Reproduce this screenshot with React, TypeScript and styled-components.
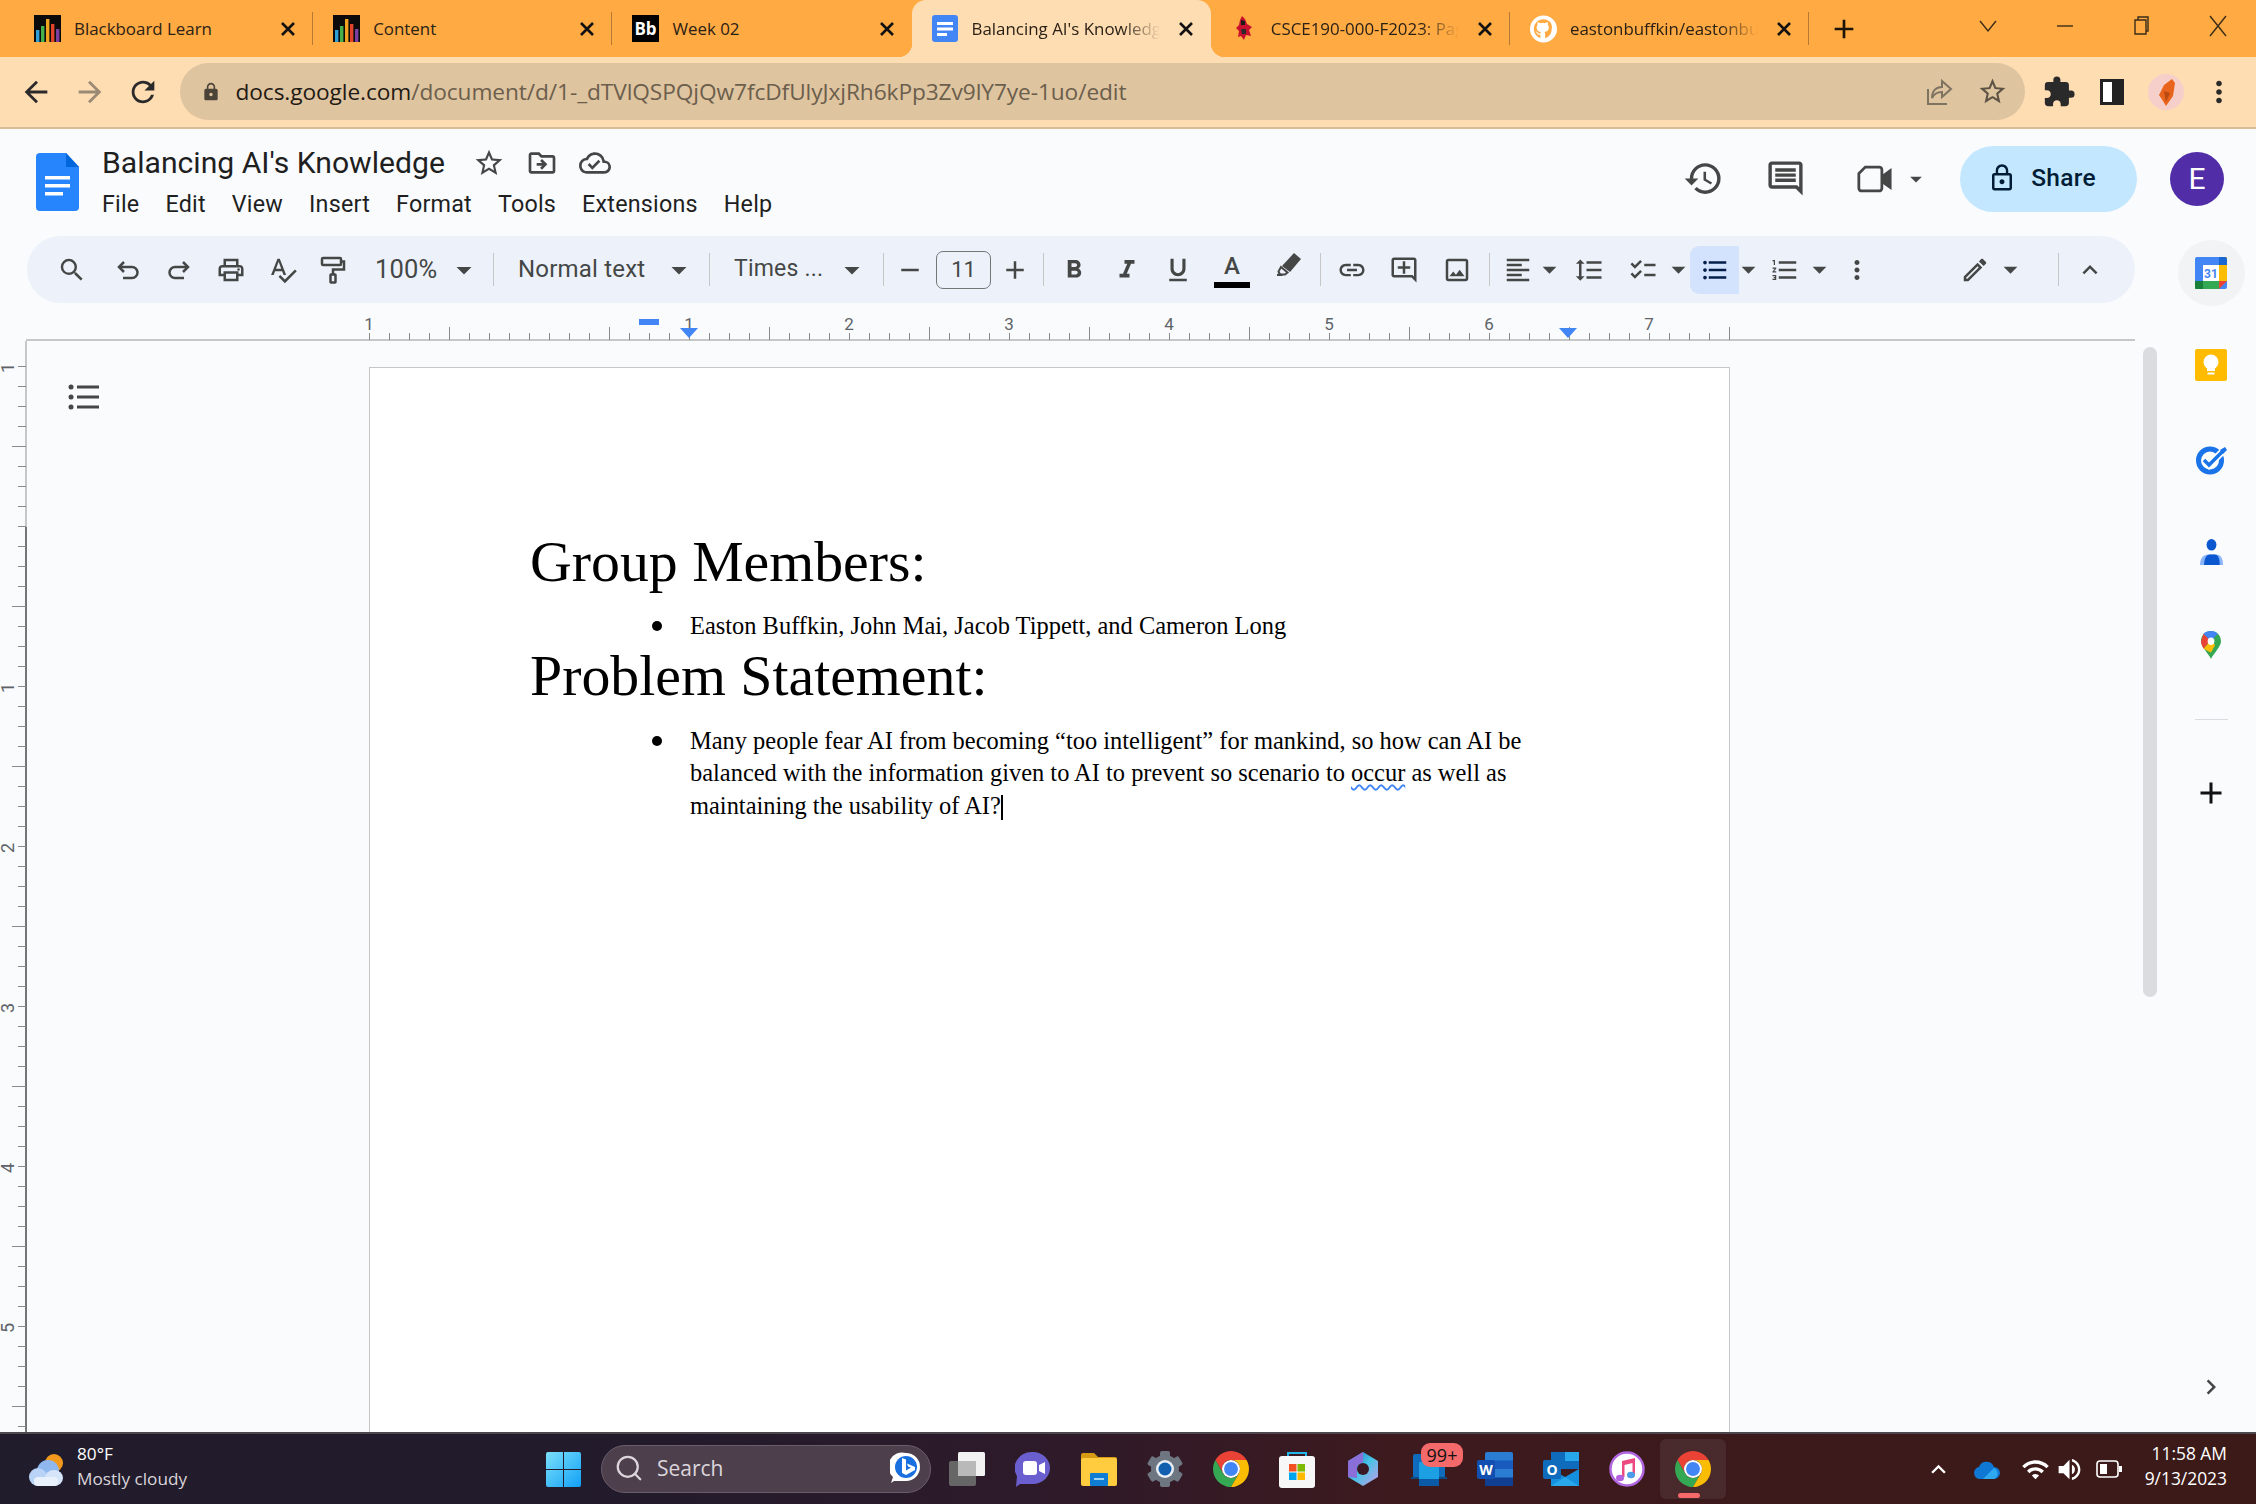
import React from "react";
import styled, { createGlobalStyle } from "styled-components";
import {
  MdAdd, MdArrowBack, MdArrowDropDown, MdArrowForward, MdChecklist, MdChevronRight, MdExpandLess, MdExtension,
  MdFormatAlignLeft, MdFormatBold, MdFormatItalic, MdFormatLineSpacing, MdFormatListBulleted, MdFormatListNumbered,
  MdFormatUnderlined, MdHistory, MdKeyboardArrowUp, MdLink, MdLock, MdLockOutline, MdMoreVert, MdOutlineAddComment,
  MdOutlineCloudDone, MdOutlineComment, MdOutlineDriveFileMove, MdOutlineEdit, MdOutlineImage,
  MdOutlinePrint, MdOutlineSpellcheck, MdRefresh, MdRemove, MdSearch, MdStarBorder, MdVolumeUp, MdWifi,
} from "react-icons/md";
import { Search } from "lucide-react";

const GlobalStyle = createGlobalStyle`
  html, body { margin: 0; padding: 0; width: 2256px; height: 1504px; overflow: hidden; }
  body { font-family: "Roboto", "Liberation Sans", sans-serif; background: #f9fbfd; }
`;

const Screen = styled.div`
  width: 2256px;
  height: 1504px;
  display: flex;
  flex-direction: column;
  overflow: hidden;
`;

/* ---------- browser chrome ---------- */
const TabStrip = styled.div`
  height: 57px;
  flex: none;
  background: #ffaa42;
  display: flex;
  padding-left: 14px;
`;
const Tab = styled.div<{ $active?: boolean; $sep?: boolean }>`
  width: 299.2px;
  height: 57px;
  flex: none;
  box-sizing: border-box;
  padding: 0 16px 0 20px;
  display: flex;
  align-items: center;
  gap: 13px;
  position: relative;
  background: ${(p) => (p.$active ? "#ffddb3" : "transparent")};
  border-radius: ${(p) => (p.$active ? "14px 14px 0 0" : "0")};
  &::after {
    content: "";
    display: ${(p) => (p.$sep ? "block" : "none")};
    position: absolute;
    right: 0;
    top: 12px;
    height: 33px;
    width: 1px;
    background: #b47a35;
  }
`;
const TabFoot = styled.span<{ $side: "left" | "right" }>`
  position: absolute;
  bottom: 0;
  width: 14px;
  height: 14px;
  ${(p) => (p.$side === "left" ? "left: -14px;" : "right: -14px;")}
  background: radial-gradient(circle at ${(p) => (p.$side === "left" ? "0 0" : "100% 0")}, transparent 14px, #ffddb3 14.5px);
`;
const TabIcon = styled.span`
  width: 27px;
  height: 27px;
  flex: none;
  display: flex;
  align-items: center;
  justify-content: center;
`;
const TabLabel = styled.span<{ $fade?: boolean }>`
  flex: 1;
  min-width: 0;
  font: 400 16.9px "Open Sans", sans-serif;
  color: #2a2116;
  white-space: nowrap;
  overflow: hidden;
  ${(p) => p.$fade && "mask-image: linear-gradient(to right, #000 78%, transparent 98%);"}
`;
const TabClose = styled.span`
  flex: none;
  width: 18px;
  display: flex;
  justify-content: center;
`;
const NewTab = styled.span`
  margin-left: 17px;
  width: 36px;
  display: flex;
  align-items: center;
  justify-content: center;
  color: #1c1408;
  font-size: 32px;
`;
const WindowControls = styled.div`
  margin-left: auto;
  display: flex;
`;
const WindowButton = styled.span`
  width: 76.5px;
  height: 52px;
  display: flex;
  align-items: center;
  justify-content: center;
`;
const NavBar = styled.div`
  height: 69px;
  flex: none;
  background: #ffddb3;
  border-bottom: 2px solid #d9bd9b;
  display: flex;
  align-items: center;
  padding: 0 17px 1px 16px;
  gap: 13.5px;
`;
const NavButton = styled.span<{ $dim?: boolean }>`
  width: 40px;
  height: 40px;
  flex: none;
  display: flex;
  align-items: center;
  justify-content: center;
  font-size: 34px;
  color: ${(p) => (p.$dim ? "#9a8a74" : "#2a2a2a")};
`;
const Omnibox = styled.div`
  flex: 1;
  height: 57px;
  margin-left: 3px;
  background: #dfc4a0;
  border-radius: 29px;
  display: flex;
  align-items: center;
  padding: 0 17px 0 21px;
  color: #4b4338;
`;
const Url = styled.span`
  margin-left: 15px;
  font: 400 22.68px "Open Sans", sans-serif;
  letter-spacing: -0.08px;
  color: #6b5e4c;
  white-space: nowrap;
  strong { font-weight: 400; color: #1f1a14; }
`;
const OmniActions = styled.div`
  margin-left: auto;
  display: flex;
  align-items: center;
  gap: 22px;
  font-size: 31px;
  color: #5d5345;
`;

/* ---------- docs header ---------- */
const DocHeader = styled.div`
  height: 107px;
  flex: none;
  background: #f9fbfd;
  display: flex;
  padding: 0 32px 0 36px;
`;
const DocLogo = styled.svg`
  width: 43px;
  height: 58px;
  margin-top: 24px;
  flex: none;
`;
const TitleBlock = styled.div`
  margin-left: 23px;
  padding-top: 12px;
`;
const TitleRow = styled.div`
  display: flex;
  align-items: center;
  height: 42px;
`;
const DocTitle = styled.span`
  font: 400 30.15px "Roboto", sans-serif;
  color: #1f1f1f;
`;
const TitleIcons = styled.div`
  margin-left: 28px;
  padding-top: 2px;
  display: flex;
  align-items: center;
  gap: 21px;
  font-size: 32px;
  color: #444746;
`;
const MenuRow = styled.div`
  display: flex;
  gap: 26px;
  margin-top: 7px;
  font: 400 23.3px "Roboto", sans-serif;
  color: #1f1f1f;
  letter-spacing: 0.22px;
`;
const HeaderRight = styled.div`
  margin-left: auto;
  display: flex;
  align-items: center;
  height: 99px;
`;
const HeaderIcon = styled.span<{ $w: number; $ml?: number }>`
  width: ${(p) => p.$w}px;
  flex: none;
  margin-left: ${(p) => p.$ml || 0}px;
  display: flex;
  justify-content: center;
  align-items: center;
  font-size: 41px;
  color: #444746;
  svg { flex: none; }
`;
const ShareButton = styled.div`
  width: 177px;
  height: 66px;
  box-sizing: border-box;
  padding: 0 14px 2px 0;
  border-radius: 33px;
  background: #c2e7ff;
  display: flex;
  align-items: center;
  justify-content: center;
  gap: 14px;
  color: #001d35;
  font: 500 24.5px "Roboto", sans-serif;
  letter-spacing: 0.3px;
`;
const Avatar = styled.div`
  width: 54px;
  height: 54px;
  margin-left: 33px;
  border-radius: 50%;
  background: #512da8;
  color: #fff;
  display: flex;
  align-items: center;
  justify-content: center;
  font: 400 30px "Roboto", sans-serif;
`;

/* ---------- workspace ---------- */
const Workspace = styled.div`
  flex: 1;
  min-height: 0;
  display: flex;
`;
const MainColumn = styled.div`
  width: 2166px;
  flex: none;
  display: flex;
  flex-direction: column;
`;
const Toolbar = styled.div`
  height: 67px;
  flex: none;
  margin: 0 31px 0 27px;
  padding: 0 14px 0 17px;
  background: #edf2fa;
  border-radius: 34px;
  display: flex;
  align-items: center;
  color: #444746;
`;
const Tool = styled.span<{ $w: number; $pl?: number; $active?: boolean }>`
  width: ${(p) => p.$w}px;
  height: 48px;
  flex: none;
  box-sizing: border-box;
  padding-left: ${(p) => p.$pl || 0}px;
  display: flex;
  align-items: center;
  justify-content: center;
  font-size: 30px;
  color: ${(p) => (p.$active ? "#041e49" : "#444746")};
  background: ${(p) => (p.$active ? "#d3e3fd" : "transparent")};
  border-radius: ${(p) => (p.$active ? "9px 0 0 9px" : "0")};
  svg { flex: none; }
`;
const Select = styled.span<{ $w: number; $pl: number; $caretAt: number; $fs: number }>`
  width: ${(p) => p.$w}px;
  height: 48px;
  flex: none;
  box-sizing: border-box;
  padding: 0 0 2px ${(p) => p.$pl}px;
  display: grid;
  grid-template-columns: ${(p) => p.$caretAt}px 36px;
  align-items: center;
  font: 400 ${(p) => p.$fs}px "Roboto", sans-serif;
  color: #444746;
  letter-spacing: 0.2px;
  white-space: nowrap;
  svg { font-size: 36px; margin-top: 2px; }
`;
const Divider = styled.span<{ $ml?: number }>`
  width: 1px;
  height: 33px;
  flex: none;
  margin-left: ${(p) => p.$ml || 0}px;
  background: #c7c7c7;
`;
const FontSizeBox = styled.span`
  width: 55px;
  height: 38px;
  flex: none;
  box-sizing: border-box;
  border: 1px solid #747775;
  border-radius: 7px;
  display: flex;
  align-items: center;
  justify-content: center;
  font: 400 22px "Roboto", sans-serif;
  color: #444746;
`;
const ColorA = styled.span`
  display: flex;
  flex-direction: column;
  align-items: center;
  font: 500 24px/28px "Roboto", sans-serif;
  color: #444746;
  &::after {
    content: "";
    width: 36px;
    height: 6px;
    background: #000;
    margin-top: 2px;
  }
`;
const ToolSpacer = styled.span`
  flex: 1;
`;
const HighlighterIcon = styled.svg`
  width: 30px;
  height: 30px;
  margin-top: -10px;
`;
const RulerRow = styled.svg`
  width: 2166px;
  height: 38px;
  flex: none;
  display: block;
`;
const EditorRow = styled.div`
  flex: 1;
  min-height: 0;
  display: flex;
  overflow: hidden;
`;
const SideRuler = styled.svg`
  width: 27px;
  height: 1091px;
  flex: none;
`;
const OutlineColumn = styled.div`
  width: 342px;
  flex: none;
  box-sizing: border-box;
  padding: 43px 0 0 41px;
`;
const Page = styled.div`
  width: 1361px;
  flex: none;
  box-sizing: border-box;
  margin-top: 26px;
  height: 1200px;
  background: #fff;
  border: 1px solid #c7c7c7;
  border-bottom: 0;
  padding: 162px 0 0 160px;
  font-family: "Liberation Serif", serif;
  color: #000;
`;
const Heading = styled.div<{ $mb: number }>`
  font-size: 57.8px;
  line-height: 64px;
  margin-bottom: ${(p) => p.$mb}px;
`;
const BulletItem = styled.div<{ $mb?: number }>`
  display: flex;
  padding-left: 122px;
  width: 918px;
  margin-bottom: ${(p) => p.$mb || 0}px;
  font-size: 24.44px;
  line-height: 32.5px;
`;
const BulletDot = styled.span`
  width: 10px;
  height: 10px;
  margin: 11px 28px 0 0;
  flex: none;
  background: #000;
  border-radius: 50%;
`;
const Misspelled = styled.span`
  text-decoration: underline wavy #4285f4 1.5px;
  text-underline-offset: 3px;
`;
const Caret = styled.span`
  display: inline-block;
  width: 2px;
  height: 25px;
  background: #000;
  vertical-align: -6px;
`;
const ScrollColumn = styled.div`
  flex: 1;
  padding: 6px 9px 0 0;
  display: flex;
  justify-content: flex-end;
`;
const ScrollThumb = styled.div`
  width: 14px;
  height: 650px;
  background: #dadce0;
  border-radius: 7px;
`;
const SidePanel = styled.div`
  flex: 1;
  position: relative;
  display: flex;
  flex-direction: column;
  align-items: center;
  padding-top: 4px;
`;
const SideSlot = styled.div<{ $h: number; $mt?: number; $round?: boolean }>`
  width: 67px;
  height: ${(p) => p.$h}px;
  margin-top: ${(p) => p.$mt || 0}px;
  flex: none;
  display: flex;
  align-items: center;
  justify-content: center;
  border-radius: 50%;
  background: ${(p) => (p.$round ? "#f1f3f4" : "transparent")};
  font-size: 36px;
  color: #111;
`;
const SideRule = styled.div`
  width: 33px;
  height: 1px;
  flex: none;
  margin: 24px 0 53px;
  background: #dadce0;
`;
const SideExpand = styled.div`
  position: absolute;
  bottom: 30px;
  font-size: 30px;
  color: #444746;
  display: flex;
`;

/* ---------- taskbar ---------- */
const Taskbar = styled.div`
  height: 70px;
  flex: none;
  border-top: 2px solid #4b474c;
  background: linear-gradient(90deg, #211c2c 0%, #231b2c 30%, #2f1a29 48%, #3d1a1e 62%, #3b1a18 100%);
  display: flex;
  align-items: center;
  position: relative;
  color: #fff;
  font-family: "Open Sans", sans-serif;
`;
const Weather = styled.div`
  width: 546px;
  flex: none;
  box-sizing: border-box;
  padding-left: 28px;
  display: flex;
  align-items: center;
  gap: 11px;
`;
const WeatherText = styled.div`
  font-size: 17.2px;
  line-height: 25px;
  padding-bottom: 6px;
  span { display: block; color: #d9d5d9; }
`;
const TaskIcons = styled.div`
  display: flex;
  align-items: center;
`;
const StartIcon = styled.svg`
  width: 35px;
  height: 35px;
  flex: none;
`;
const SearchPill = styled.div`
  width: 330px;
  height: 48px;
  margin: 0 3px 0 20px;
  flex: none;
  box-sizing: border-box;
  border: 1.5px solid #6a5d69;
  border-radius: 24px;
  background: #4d3f4c;
  display: flex;
  align-items: center;
  padding: 0 8px 2px 12px;
  color: #dcd6dc;
  font-size: 21px;
  gap: 13px;
`;
const SearchAction = styled.svg`
  margin-left: auto;
  width: 32px;
  height: 32px;
`;
const AppSlot = styled.span<{ $active?: boolean }>`
  width: 66px;
  height: 60px;
  flex: none;
  position: relative;
  display: flex;
  align-items: center;
  justify-content: center;
  border-radius: 6px;
  background: ${(p) => (p.$active ? "rgba(255,255,255,0.07)" : "transparent")};
`;
const RunningMark = styled.span`
  position: absolute;
  bottom: 1px;
  left: 18px;
  width: 22px;
  height: 5px;
  border-radius: 3px;
  background: #f7686a;
`;
const CountBadge = styled.span`
  position: absolute;
  left: 25px;
  top: 4px;
  width: 42px;
  height: 24px;
  border-radius: 9px;
  background: #f4696a;
  color: #111;
  font-size: 18px;
  line-height: 24px;
  text-align: center;
`;
const Tray = styled.div`
  margin-left: auto;
  display: flex;
  align-items: center;
  padding-right: 29px;
`;
const TrayIcon = styled.span<{ $w: number }>`
  width: ${(p) => p.$w}px;
  flex: none;
  display: flex;
  justify-content: center;
  font-size: 29px;
  svg { flex: none; }
`;
const Clock = styled.div`
  margin-left: 9px;
  text-align: right;
  font-size: 17.4px;
  line-height: 25px;
  padding-bottom: 6px;
`;

/* ---------- drawings ---------- */
const CloseX = () => (
  <svg width="16" height="16" viewBox="0 0 16 16" stroke="#111" strokeWidth="2.6">
    <path d="M2 2l12 12M14 2L2 14" />
  </svg>
);
const BarsFavicon = () => (
  <svg width="27" height="27" viewBox="0 0 27 27">
    <rect width="27" height="27" fill="#0b0b0b" />
    <rect x="2" y="15" width="3.4" height="12" fill="#2f9fd8" />
    <rect x="7" y="11" width="3.4" height="16" fill="#46b04a" />
    <rect x="12" y="4" width="3.4" height="23" fill="#f0a31e" />
    <rect x="17" y="9" width="3.4" height="18" fill="#e0452c" />
    <rect x="22" y="14" width="3.4" height="13" fill="#7a3fa0" />
  </svg>
);
const BbFavicon = () => (
  <svg width="27" height="27" viewBox="0 0 27 27">
    <rect width="27" height="27" fill="#000" />
    <text x="13.5" y="20" textAnchor="middle" fill="#fff" fontFamily="Open Sans" fontWeight="700" fontSize="17">Bb</text>
  </svg>
);
const DocsFavicon = () => (
  <svg width="26" height="27" viewBox="0 0 26 27">
    <rect width="26" height="27" rx="3" fill="#4285f4" />
    <rect x="5" y="7" width="16" height="3" fill="#fff" />
    <rect x="5" y="12.5" width="16" height="3" fill="#fff" />
    <rect x="5" y="18" width="10" height="3" fill="#fff" />
  </svg>
);
const BirdFavicon = () => (
  <svg width="20" height="27" viewBox="4 0 20 27">
    <path d="M12 1l3 3 2 5 5 3-3 3 2 6-5-1-2 5-3-4-3 1 1-6-3-3 3-3 1-5z" fill="#c8102e" />
    <path d="M11 5l4 1 0 4-4 0z" fill="#1b1b1b" />
    <path d="M11 14l5 0 0 5-4 0z" fill="#2b2b2b" />
    <path d="M9 24l2 0 0 2-2 0zM15 24l2 0 0 2-2 0z" fill="#e9b949" />
  </svg>
);
const GithubFavicon = () => (
  <svg width="28" height="28" viewBox="0 0 28 28">
    <circle cx="14" cy="14" r="14" fill="#fff" />
    <path d="M14 4c-5.500 0-10 4.400-10 9.900 0 4.400 2.900 8.100 6.800 9.400v-3.400c-2.800.6-3.400-1.200-3.400-1.200-.5-1.100-1.100-1.400-1.100-1.400-.9-.6.1-.6.1-.6 1 .1 1.500 1 1.500 1 .9 1.500 2.300 1.100 2.900.8.1-.6.3-1.100.6-1.300-2.200-.3-4.500-1.100-4.500-4.900 0-1.100.4-2 1-2.700-.1-.3-.4-1.300.1-2.600 0 0 .8-.3 2.700 1 .8-.2 1.600-.3 2.500-.3s1.700.1 2.500.3c1.900-1.300 2.700-1 2.700-1 .5 1.300.2 2.300.1 2.600.6.7 1 1.600 1 2.700 0 3.800-2.300 4.600-4.500 4.900.4.3.7.9.7 1.900v4.500c3.900-1.300 6.800-5 6.800-9.400C24 8.400 19.500 4 14 4z" fill="#ffaa42" />
  </svg>
);
const WindowGlyph = ({ kind }: { kind: string }) => (
  <svg width="24" height="26" viewBox="0 0 24 26" fill="none" stroke="#3a2c18" strokeWidth="1.4">
    {kind === "chev" && <path d="M4 8l8 10 8-10" />}
    {kind === "min" && <path d="M4 13h16" />}
    {kind === "max" && <path d="M6 7h11v14H6zM9 7V4h10v14h-2" />}
    {kind === "close" && <path d="M4 3l16 20M20 3L4 23" />}
  </svg>
);
const ShareInPage = () => (
  <svg width="30" height="30" viewBox="0 0 30 30" fill="none" stroke="#7e7360" strokeWidth="2">
    <path d="M17 4l9 8-9 8v-5c-5 0-8 2-10 6 0-7 4-11 10-11z" />
    <path d="M3 12v15h19" />
  </svg>
);
const SidePanelGlyph = () => (
  <svg width="24" height="26" viewBox="0 0 24 26">
    <rect x="1.500" y="1.500" width="21" height="23" fill="#fff" stroke="#222" strokeWidth="3" />
    <rect x="12" y="1.500" width="11" height="23" fill="#222" />
  </svg>
);
const ProfileGlyph = () => (
  <svg width="36" height="38" viewBox="0 0 36 38">
    <circle cx="18" cy="19" r="18" fill="#f7cfca" />
    <path d="M11 22l5-10 8-6 3 4-2 13-7 10-3-5z" fill="#e8631c" />
    <path d="M16 18l6 2-4 9z" fill="#b84a12" />
  </svg>
);
const DocsLogo = () => (
  <DocLogo viewBox="0 0 43 58">
    <path d="M4 0h26l13 14v40a4 4 0 0 1-4 4H4a4 4 0 0 1-4-4V4a4 4 0 0 1 4-4z" fill="#2684fc" />
    <path d="M30 0l13 14H30z" fill="#0066da" />
    <rect x="9" y="23" width="25" height="3.500" fill="#fff" />
    <rect x="9" y="31" width="25" height="3.500" fill="#fff" />
    <rect x="9" y="39" width="18" height="3.500" fill="#fff" />
  </DocLogo>
);
const MeetGlyph = () => (
  <svg width="35" height="28" viewBox="0 0 38 30" fill="none" stroke="#444746" strokeWidth="3">
    <path d="M9 2h15a3 3 0 0 1 3 3v20a3 3 0 0 1-3 3H5a3 3 0 0 1-3-3V9z" />
    <path d="M29 11l7-5v18l-7-5z" fill="#444746" />
  </svg>
);
const UndoGlyph = ({ flip }: { flip?: boolean }) => (
  <svg width="30" height="30" viewBox="0 0 30 30" fill="none" stroke="currentColor" strokeWidth="2.500">
    <g transform={flip ? "translate(30 0) scale(-1 1)" : undefined}>
      <path d="M11 7l-5 5 5 5" />
      <path d="M6 12h13a5.500 5.500 0 0 1 0 11H10" />
    </g>
  </svg>
);
const RollerGlyph = () => (
  <svg width="28" height="30" viewBox="0 0 28 30" fill="none" stroke="currentColor" strokeWidth="2.500">
    <rect x="3" y="3" width="19" height="7" rx="1" />
    <path d="M22 6.500h3v8H14v5" />
    <rect x="11.500" y="19.500" width="5" height="8" rx="0.500" />
  </svg>
);
const Highlighter = () => (
  <HighlighterIcon viewBox="0 0 30 30" fill="#444746">
    <path d="M20 3l7 6-11 13-8-6z" />
    <path d="M7 17l6.500 5.500-2.500 2H6l-1.500-3z" fill="none" stroke="#444746" strokeWidth="2" />
    <path d="M3 24l3-1 3 3H3z" />
  </HighlighterIcon>
);
const Drop = () => <MdArrowDropDown size={33} />;
const OutlineList = () => (
  <svg width="32" height="26" viewBox="0 0 32 26" display="block">
    {[3, 13, 23].map((y) => (
      <g key={y} fill="#444746">
        <circle cx="3" cy={y} r="2.500" />
        <rect x="9" y={y - 1.5} width="22" height="3" />
      </g>
    ))}
  </svg>
);

const RULER_TICKS = Array.from({ length: 69 }, (_, i) => i);
const TopRuler = () => (
  <RulerRow viewBox="0 0 2166 38">
    <rect x="26" y="36" width="2109" height="2" fill="#c7c7c7" />
    {RULER_TICKS.map((i) => (
      <rect key={i} x={369 + i * 20} y={i % 4 === 0 && i % 8 !== 0 ? 24 : 30} width="1" height={i % 4 === 0 && i % 8 !== 0 ? 13 : 7} fill="#8a8a8a" />
    ))}
    {[["1", 369], ["1", 689], ["2", 849], ["3", 1009], ["4", 1169], ["5", 1329], ["6", 1489], ["7", 1649]].map(([label, x]) => (
      <text key={x} x={x} y="27" textAnchor="middle" fontFamily="Roboto" fontSize="17" fill="#5f6368">{label}</text>
    ))}
    <rect x="639" y="16" width="20" height="6" fill="#4285f4" />
    <path d="M680 25h18l-9 10z" fill="#4285f4" />
    <path d="M1559 25h18l-9 10z" fill="#4285f4" />
  </RulerRow>
);
const LeftRuler = () => (
  <SideRuler viewBox="0 0 27 1091">
    <rect x="25" y="0" width="2" height="186" fill="#c7c7c7" />
    <rect x="25" y="186" width="2" height="905" fill="#757575" />
    {Array.from({ length: 55 }, (_, i) => i).map((i) => (
      <rect key={i} x={i % 4 === 0 && i % 8 !== 0 ? 12 : 18} y={25 + i * 20} width={i % 4 === 0 && i % 8 !== 0 ? 14 : 8} height="1" fill="#8a8a8a" />
    ))}
    {[["1", 27], ["1", 347], ["2", 507], ["3", 667], ["4", 827], ["5", 987]].map(([label, y]) => (
      <text key={y} x="0" y="0" transform={`translate(14 ${y}) rotate(-90)`} textAnchor="middle" fontFamily="Roboto" fontSize="18" fill="#5f6368">{label}</text>
    ))}
  </SideRuler>
);

const CalendarApp = () => (
  <svg width="32" height="32" viewBox="0 0 32 32">
    <rect width="32" height="32" rx="2" fill="#4285f4" />
    <rect x="24" width="8" height="24" fill="#fbbc04" />
    <rect y="24" width="24" height="8" fill="#34a853" />
    <path d="M24 24h8l-8 8z" fill="#ea4335" />
    <path d="M24 0h6a2 2 0 0 1 2 2v6h-8z" fill="#1967d2" />
    <path d="M0 24h8v8H2a2 2 0 0 1-2-2z" fill="#188038" />
    <rect x="8" y="8" width="16" height="16" fill="#fff" />
    <text x="16" y="21" textAnchor="middle" fontFamily="Roboto" fontWeight="700" fontSize="12" fill="#4285f4">31</text>
  </svg>
);
const KeepApp = () => (
  <svg width="32" height="32" viewBox="0 0 32 32">
    <rect width="32" height="32" rx="2" fill="#ffbb00" />
    <circle cx="16" cy="13" r="7.500" fill="#fff" />
    <rect x="12" y="19" width="8" height="3" fill="#fff" />
    <rect x="12.500" y="23.500" width="7" height="2" fill="#fff" />
  </svg>
);
const TasksApp = () => (
  <svg width="34" height="30" viewBox="0 0 34 30" fill="none">
    <circle cx="16" cy="15.500" r="11.500" stroke="#1a73e8" strokeWidth="5" />
    <path d="M10 15l5 5 16-16" stroke="#fff" strokeWidth="7" />
    <path d="M10 15l5 5 15-15" stroke="#1a73e8" strokeWidth="3.500" />
    <path d="M26 5l5-3 2 3-4 4z" fill="#1a73e8" />
  </svg>
);
const ContactsApp = () => (
  <svg width="23" height="27" viewBox="0 0 28 28" preserveAspectRatio="none">
    <path d="M0 27c0-7 4-11 10-11h10c5 0 8 4 8 11z" fill="#8ab4f8" />
    <path d="M5 27c0-7 3-11 7-11h6c4 0 6 4 6 11z" fill="#0b57d0" />
    <circle cx="14" cy="6" r="6" fill="#0b57d0" />
  </svg>
);
const MapsApp = () => (
  <svg width="20" height="28" viewBox="0 0 24 30" preserveAspectRatio="none">
    <path d="M12 30C9 24 0 17 0 11 0 5 5 0 12 0s12 5 12 11c0 6-9 13-12 19z" fill="#34a853" />
    <path d="M3 3L0 11c0 3 2 6 3 8l9-10z" fill="#ea4335" />
    <path d="M3 3c2-2 5-3 9-3 3 0 6 1 8 3L12 11z" fill="#4285f4" />
    <path d="M3 19l9-9 5 5-5 8c-3-1-7-3-9-4z" fill="#fbbc04" />
    <circle cx="12" cy="11" r="4" fill="#fff" />
  </svg>
);

const WeatherGlyph = () => (
  <svg width="38" height="36" viewBox="0 0 38 36">
    <circle cx="26" cy="12" r="9" fill="#f39a1e" />
    <ellipse cx="20" cy="20" rx="11" ry="11" fill="#8fb8f0" />
    <ellipse cx="10" cy="26" rx="9" ry="9" fill="#b9d3f6" />
    <ellipse cx="26" cy="27" rx="9" ry="8" fill="#d6e5fa" />
    <rect x="6" y="26" width="24" height="9" rx="4" fill="#e9f1fd" />
  </svg>
);
const Start = () => (
  <StartIcon viewBox="0 0 35 35">
    <defs>
      <linearGradient id="startFill" x1="0" y1="0" x2="1" y2="1">
        <stop offset="0" stopColor="#7be0fb" />
        <stop offset="1" stopColor="#12a0f6" />
      </linearGradient>
    </defs>
    <path d="M0 2a2 2 0 0 1 2-2h15v17H0zM18 0h15a2 2 0 0 1 2 2v15H18zM0 18h17v17H2a2 2 0 0 1-2-2zM18 18h17v15a2 2 0 0 1-2 2H18z" fill="url(#startFill)" />
  </StartIcon>
);
const BingGlyph = () => (
  <SearchAction viewBox="0 0 32 32">
    <path d="M16 1a14 14 0 0 1 0 28H4l-3 2 2-6A14 14 0 0 1 16 1z" fill="#fff" />
    <circle cx="16" cy="15" r="11" fill="#1a6fe0" />
    <path d="M12 6l4 1.500v11l5-3-3-1-1-3 8 3.500v3l-9 5-4-2z" fill="#fff" />
  </SearchAction>
);
const TaskView = () => (
  <svg width="36" height="34" viewBox="0 0 36 34">
    <rect x="0" y="9" width="27" height="25" rx="2" fill="#666" />
    <rect x="9" y="0" width="27" height="24" rx="1.500" fill="#f2f2f2" />
    <rect x="9" y="9" width="18" height="15" fill="#b9b9b9" />
  </svg>
);
const ChatApp = () => (
  <svg width="36" height="36" viewBox="0 0 36 36">
    <path d="M18 1a17 16 0 0 1 0 32H5l-4 3 1-11A17 16 0 0 1 18 1z" fill="#6b5fd0" />
    <rect x="8" y="10" width="14" height="14" rx="3" fill="#fff" />
    <path d="M24 14l6-3v12l-6-3z" fill="#fff" />
  </svg>
);
const FolderApp = () => (
  <svg width="36" height="34" viewBox="0 0 36 34">
    <path d="M0 3a2 2 0 0 1 2-2h11l4 4h17a2 2 0 0 1 2 2v4H0z" fill="#d69a14" />
    <rect y="6" width="36" height="28" rx="2" fill="#ffcc40" />
    <rect x="9" y="21" width="18" height="13" rx="1" fill="#0f7dd4" />
    <rect x="13" y="26" width="10" height="2" fill="#9ed4f6" />
  </svg>
);
const GearApp = () => (
  <svg width="36" height="36" viewBox="0 0 36 36">
    {[0, 60, 120, 180, 240, 300].map((a) => (
      <rect key={a} x="13" y="0" width="10" height="10" rx="2" fill="#6d7681" transform={`rotate(${a} 18 18)`} />
    ))}
    <circle cx="18" cy="18" r="14" fill="#6d7681" />
    <circle cx="18" cy="18" r="9" fill="#e8eef4" />
    <circle cx="18" cy="18" r="6.500" fill="#125fb0" />
  </svg>
);
const ChromeApp = () => (
  <svg width="36" height="36" viewBox="2 2 44 44">
    <path d="M24 13H43A22 22 0 0 0 5 13L14.470 29.500A11 11 0 0 1 24 13Z" fill="#ea4335" />
    <path d="M14.470 29.500L5 13A22 22 0 0 0 24 46L33.530 29.500A11 11 0 0 1 14.470 29.500Z" fill="#34a853" />
    <path d="M33.530 29.500L24 46A22 22 0 0 0 43 13H24A11 11 0 0 1 33.530 29.500Z" fill="#fbbc04" />
    <circle cx="24" cy="24" r="11" fill="#fff" />
    <circle cx="24" cy="24" r="8.500" fill="#4285f4" />
  </svg>
);
const StoreApp = () => (
  <svg width="36" height="38" viewBox="0 0 36 38">
    <path d="M9 8V3h18v5" fill="none" stroke="#22b5e8" strokeWidth="2" />
    <rect y="6" width="36" height="32" rx="3" fill="#f7f7f7" />
    <rect x="10" y="14" width="7.500" height="7.500" fill="#f25022" />
    <rect x="18.500" y="14" width="7.500" height="7.500" fill="#7fba00" />
    <rect x="10" y="22.500" width="7.500" height="7.500" fill="#00a4ef" />
    <rect x="18.500" y="22.500" width="7.500" height="7.500" fill="#ffb900" />
  </svg>
);
const CopilotApp = () => (
  <svg width="32" height="36" viewBox="0 0 32 36">
    <defs>
      <linearGradient id="copilotRing" x1="0" y1="0" x2="1" y2="1">
        <stop offset="0" stopColor="#1f6fc4" />
        <stop offset="0.5" stopColor="#48c4e6" />
        <stop offset="1" stopColor="#c79ae8" />
      </linearGradient>
    </defs>
    <path d="M16 1l15 9v16l-15 9-15-9V10z" fill="url(#copilotRing)" />
    <path d="M1 10l15-9v10l-6 4v12l-9-1z" fill="#8a6fd8" />
    <circle cx="16" cy="18" r="6" fill="#3a1a22" />
  </svg>
);
const MailApp = () => (
  <svg width="36" height="34" viewBox="0 0 36 34">
    <rect x="2" y="2" width="32" height="24" rx="2" fill="#0f6cbd" />
    <rect y="25" width="36" height="2" fill="#0a4a85" />
    <rect x="8" y="10" width="20" height="24" rx="1" fill="#1c9fe3" />
    <rect x="8" y="27" width="20" height="7" fill="#0b5aa5" />
  </svg>
);
const WordApp = () => (
  <svg width="36" height="34" viewBox="0 0 36 34">
    <rect x="8" width="28" height="34" rx="2" fill="#2b7cd3" />
    <rect x="8" y="8.500" width="28" height="8.500" fill="#185abd" />
    <rect x="8" y="25.500" width="28" height="8.500" fill="#103f91" />
    <rect x="0" y="8" width="18" height="19" rx="2" fill="#114fb0" />
    <text x="9" y="23" textAnchor="middle" fontFamily="Open Sans" fontWeight="700" fontSize="14" fill="#fff">W</text>
  </svg>
);
const OutlookApp = () => (
  <svg width="36" height="34" viewBox="0 0 36 34">
    <rect x="8" width="28" height="17" fill="#0f6cbd" />
    <rect x="22" width="14" height="9" fill="#28a8ea" />
    <path d="M8 17l14 8 14-8v17H8z" fill="#1490df" />
    <path d="M8 34l14-9 14 9z" fill="#28a8ea" />
    <rect x="0" y="8" width="18" height="19" rx="2" fill="#0f6cbd" />
    <text x="9" y="23" textAnchor="middle" fontFamily="Open Sans" fontWeight="700" fontSize="14" fill="#fff">O</text>
  </svg>
);
const MusicApp = () => (
  <svg width="36" height="36" viewBox="0 0 36 36">
    <circle cx="18" cy="18" r="16.500" fill="#fff" stroke="#b067e0" strokeWidth="2.500" />
    <path d="M13 10l13-3v16h-2.500V12l-8 2v12H13z" fill="#ee4a82" />
    <ellipse cx="11" cy="27" rx="4" ry="3.200" fill="#b45fe0" />
    <ellipse cx="22" cy="24" rx="4" ry="3.200" fill="#4d9be8" />
  </svg>
);
const OneDrive = () => (
  <svg width="26" height="20" viewBox="0 0 26 20">
    <path d="M6 20a6 6 0 0 1-1-11.900A8 8 0 0 1 20 8a6 6 0 0 1 0 12z" fill="#0f78d4" />
    <path d="M9 20l11-11a6 6 0 0 1 0 11z" fill="#2ea8ee" />
  </svg>
);
const Battery = () => (
  <svg width="26" height="18" viewBox="0 0 26 18">
    <rect x="1" y="1" width="21" height="16" rx="3" fill="none" stroke="#fff" strokeWidth="1.600" />
    <rect x="4" y="4" width="7" height="10" fill="#fff" />
    <rect x="23" y="6" width="3" height="6" fill="#fff" />
  </svg>
);

const tabs = [
  { label: "Blackboard Learn", icon: <BarsFavicon />, sep: true },
  { label: "Content", icon: <BarsFavicon />, sep: true },
  { label: "Week 02", icon: <BbFavicon />, sep: false },
  { label: "Balancing AI's Knowledge", icon: <DocsFavicon />, active: true, fade: true },
  { label: "CSCE190-000-F2023: Pages", icon: <BirdFavicon />, sep: true, fade: true },
  { label: "eastonbuffkin/eastonbuffkin", icon: <GithubFavicon />, sep: true, fade: true },
];
const menus = ["File", "Edit", "View", "Insert", "Format", "Tools", "Extensions", "Help"];

function App() {
  return (
    <Screen>
      <GlobalStyle />
      <TabStrip>
        {tabs.map((t) => (
          <Tab key={t.label} $active={t.active} $sep={t.sep}>
            {t.active && <TabFoot $side="left" />}
            {t.active && <TabFoot $side="right" />}
            <TabIcon>{t.icon}</TabIcon>
            <TabLabel $fade={t.fade}>{t.label}</TabLabel>
            <TabClose><CloseX /></TabClose>
          </Tab>
        ))}
        <NewTab><MdAdd /></NewTab>
        <WindowControls>
          <WindowButton><WindowGlyph kind="chev" /></WindowButton>
          <WindowButton><WindowGlyph kind="min" /></WindowButton>
          <WindowButton><WindowGlyph kind="max" /></WindowButton>
          <WindowButton><WindowGlyph kind="close" /></WindowButton>
        </WindowControls>
      </TabStrip>
      <NavBar>
        <NavButton><MdArrowBack /></NavButton>
        <NavButton $dim><MdArrowForward /></NavButton>
        <NavButton><MdRefresh /></NavButton>
        <Omnibox>
          <MdLock size={20} />
          <Url><strong>docs.google.com</strong>/document/d/1-_dTVlQSPQjQw7fcDfUlyJxjRh6kPp3Zv9lY7ye-1uo/edit</Url>
          <OmniActions>
            <ShareInPage />
            <MdStarBorder />
          </OmniActions>
        </Omnibox>
        <NavButton><MdExtension /></NavButton>
        <NavButton><SidePanelGlyph /></NavButton>
        <NavButton><ProfileGlyph /></NavButton>
        <NavButton><MdMoreVert /></NavButton>
      </NavBar>
      <DocHeader>
        <DocsLogo />
        <TitleBlock>
          <TitleRow>
            <DocTitle>Balancing AI's Knowledge</DocTitle>
            <TitleIcons>
              <MdStarBorder />
              <MdOutlineDriveFileMove />
              <MdOutlineCloudDone />
            </TitleIcons>
          </TitleRow>
          <MenuRow>
            {menus.map((m) => <span key={m}>{m}</span>)}
          </MenuRow>
        </TitleBlock>
        <HeaderRight>
          <HeaderIcon $w={82}><MdHistory /></HeaderIcon>
          <HeaderIcon $w={82}><MdOutlineComment /></HeaderIcon>
          <HeaderIcon $w={76} $ml={10}><MeetGlyph /></HeaderIcon>
          <HeaderIcon $w={8}><MdArrowDropDown size={28} /></HeaderIcon>
          <HeaderIcon $w={40} />
          <ShareButton><MdLockOutline size={30} />Share</ShareButton>
          <Avatar>E</Avatar>
        </HeaderRight>
      </DocHeader>
      <Workspace>
        <MainColumn>
          <Toolbar>
            <Tool $w={56}><MdSearch /></Tool>
            <Tool $w={56}><UndoGlyph /></Tool>
            <Tool $w={46}><UndoGlyph flip /></Tool>
            <Tool $w={58}><MdOutlinePrint /></Tool>
            <Tool $w={46}><MdOutlineSpellcheck /></Tool>
            <Tool $w={54}><RollerGlyph /></Tool>
            <Select $w={133} $pl={15} $caretAt={71} $fs={25.5}>100%<MdArrowDropDown /></Select>
            <Divider />
            <Select $w={215} $pl={24} $caretAt={143} $fs={24}>Normal text<MdArrowDropDown /></Select>
            <Divider />
            <Select $w={173} $pl={24} $caretAt={100} $fs={23}>Times ...<MdArrowDropDown /></Select>
            <Divider />
            <Tool $w={52}><MdRemove /></Tool>
            <FontSizeBox>11</FontSizeBox>
            <Tool $w={48}><MdAdd /></Tool>
            <Divider $ml={4} />
            <Tool $w={60}><MdFormatBold /></Tool>
            <Tool $w={46}><MdFormatItalic /></Tool>
            <Tool $w={56}><MdFormatUnderlined /></Tool>
            <Tool $w={52}><ColorA>A</ColorA></Tool>
            <Tool $w={62}><Highlighter /></Tool>
            <Divider />
            <Tool $w={62}><MdLink /></Tool>
            <Tool $w={42}><MdOutlineAddComment /></Tool>
            <Tool $w={64}><MdOutlineImage /></Tool>
            <Divider />
            <Tool $w={56}><MdFormatAlignLeft /></Tool>
            <Tool $w={6}><Drop /></Tool>
            <Tool $w={74}><MdFormatLineSpacing /></Tool>
            <Tool $w={34}><MdChecklist /></Tool>
            <Tool $w={30} $pl={6}><Drop /></Tool>
            <Tool $w={49} $active><MdFormatListBulleted /></Tool>
            <Tool $w={18}><Drop /></Tool>
            <Tool $w={56}><MdFormatListNumbered /></Tool>
            <Tool $w={12}><Drop /></Tool>
            <Tool $w={64}><MdMoreVert /></Tool>
            <ToolSpacer />
            <Tool $w={50}><MdOutlineEdit /></Tool>
            <Tool $w={20}><Drop /></Tool>
            <Divider $ml={38} />
            <Tool $w={62}><MdExpandLess /></Tool>
          </Toolbar>
          <TopRuler />
          <EditorRow>
            <LeftRuler />
            <OutlineColumn><OutlineList /></OutlineColumn>
            <Page>
              <Heading $mb={16}>Group Members:</Heading>
              <BulletItem $mb={1}>
                <BulletDot />
                <span>Easton Buffkin, John Mai, Jacob Tippett, and Cameron Long</span>
              </BulletItem>
              <Heading $mb={17}>Problem Statement:</Heading>
              <BulletItem>
                <BulletDot />
                <span>
                  Many people fear AI from becoming “too intelligent” for mankind, so how can AI be balanced with the
                  information given to AI to prevent so scenario to <Misspelled>occur</Misspelled> as well as maintaining
                  the usability of AI?<Caret />
                </span>
              </BulletItem>
            </Page>
            <ScrollColumn><ScrollThumb /></ScrollColumn>
          </EditorRow>
        </MainColumn>
        <SidePanel>
          <SideSlot $h={66} $round><CalendarApp /></SideSlot>
          <SideSlot $h={92} $mt={13}><KeepApp /></SideSlot>
          <SideSlot $h={98}><TasksApp /></SideSlot>
          <SideSlot $h={86}><ContactsApp /></SideSlot>
          <SideSlot $h={100}><MapsApp /></SideSlot>
          <SideRule />
          <SideSlot $h={40}><MdAdd /></SideSlot>
          <SideExpand><MdChevronRight /></SideExpand>
        </SidePanel>
      </Workspace>
      <Taskbar>
        <Weather>
          <WeatherGlyph />
          <WeatherText>80°F<span>Mostly cloudy</span></WeatherText>
        </Weather>
        <TaskIcons>
          <Start />
          <SearchPill>
            <Search size={30} strokeWidth={1.8} />
            Search
            <BingGlyph />
          </SearchPill>
          <AppSlot><TaskView /></AppSlot>
          <AppSlot><ChatApp /></AppSlot>
          <AppSlot><FolderApp /></AppSlot>
          <AppSlot><GearApp /></AppSlot>
          <AppSlot><ChromeApp /></AppSlot>
          <AppSlot><StoreApp /></AppSlot>
          <AppSlot><CopilotApp /></AppSlot>
          <AppSlot><MailApp /><CountBadge>99+</CountBadge></AppSlot>
          <AppSlot><WordApp /></AppSlot>
          <AppSlot><OutlookApp /></AppSlot>
          <AppSlot><MusicApp /></AppSlot>
          <AppSlot $active><ChromeApp /><RunningMark /></AppSlot>
        </TaskIcons>
        <Tray>
          <TrayIcon $w={44}><MdKeyboardArrowUp /></TrayIcon>
          <TrayIcon $w={53}><OneDrive /></TrayIcon>
          <TrayIcon $w={44}><MdWifi /></TrayIcon>
          <TrayIcon $w={24}><MdVolumeUp /></TrayIcon>
          <TrayIcon $w={54}><Battery /></TrayIcon>
          <Clock>11:58 AM<br />9/13/2023</Clock>
        </Tray>
      </Taskbar>
    </Screen>
  );
}

export default App;
